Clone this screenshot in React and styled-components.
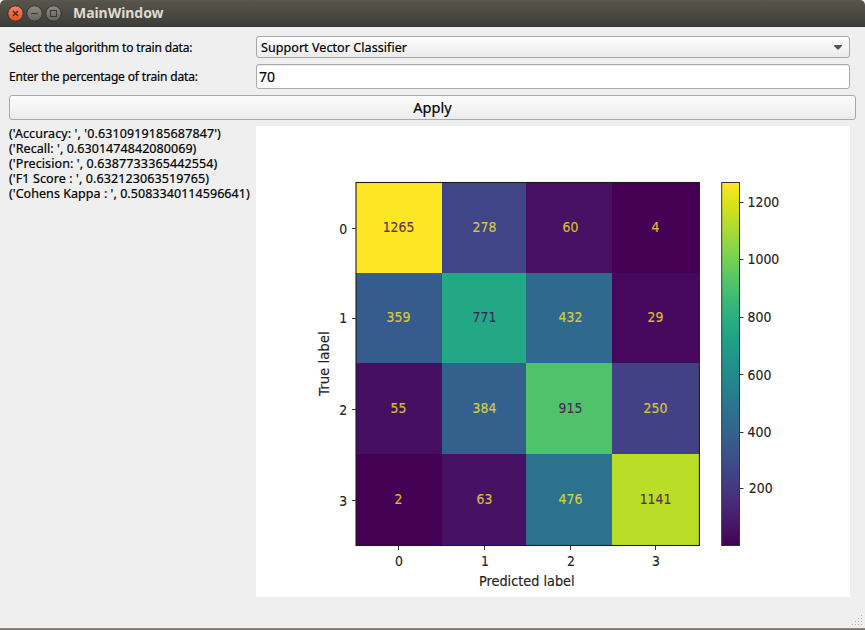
import React from "react";
import styled, { createGlobalStyle } from "styled-components";

const Global = createGlobalStyle`
  * { box-sizing: border-box; }
  body { margin: 0; background: #efefef; font-family: "Noto Sans", "Open Sans", sans-serif; color: #000; }
`;

const Window = styled.div`
  width: 865px;
  height: 630px;
  display: flex;
  flex-direction: column;
  background: #efefef;
  overflow: hidden;
`;

const TitleBar = styled.header`
  height: 27px;
  flex: none;
  display: flex;
  align-items: center;
  padding-left: 7px;
  background: linear-gradient(#5b584f 0, #56534b 2px, #3e3d39 100%);
  border-bottom: 1px solid #383733;
  border-radius: 5px 5px 0 0;
`;

const Controls = styled.svg`
  width: 56px;
  height: 18px;
  flex: none;
`;

const Title = styled.h1`
  margin: 0 0 0 10px;
  font-size: 14px;
  line-height: 20px;
  font-weight: 700;
  letter-spacing: -0.05px;
  color: #dfdbd2;
  white-space: nowrap;
`;

const Content = styled.main`
  flex: 1;
  display: flex;
  flex-direction: column;
  padding: 9px 9px 0;
`;

const Form = styled.div`
  display: grid;
  grid-template-columns: 247px 594px;
  grid-template-rows: 22px 25px;
  row-gap: 6px;
  align-items: stretch;
`;

const Text = styled.span`
  font-size: ${(p) => p.$size || 12.5}px;
  letter-spacing: ${(p) => p.$spacing || 0}px;
  line-height: 15px;
  white-space: pre;
  -webkit-text-stroke: 0.2px #000;
`;

const Label = styled.label`
  display: flex;
  align-items: center;
`;

const Select = styled.div`
  display: flex;
  align-items: center;
  justify-content: space-between;
  padding: 0 7px 0 4px;
  border: 1px solid #a9a9a9;
  border-radius: 3px;
  background: linear-gradient(#fdfdfd, #ebebeb);
`;

const Arrow = styled.svg`
  width: 8px;
  height: 5px;
`;

const Field = styled.div`
  display: flex;
  align-items: center;
  padding-left: 2px;
  border: 1px solid #a9a9a9;
  border-radius: 3px;
  background: #fff;
  box-shadow: inset 0 1px 0 #ebebeb;
`;

const Button = styled.button`
  height: 25px;
  flex: none;
  margin: 6px 0;
  padding: 0;
  width: 847px;
  border: 1px solid #a9a9a9;
  border-radius: 3px;
  background: linear-gradient(#fdfdfd, #ebebeb);
  font-family: inherit;
  color: #000;
`;

const Results = styled.div`
  display: grid;
  grid-template-columns: 247px 594px;
`;

const Metrics = styled.div`
  display: flex;
  flex-direction: column;
`;

const Plot = styled.svg`
  width: 594px;
  height: 471px;
  display: block;
  background: #fff;
`;

const PlotText = styled.text`
  font-family: "DejaVu Sans", sans-serif;
  font-size: ${(p) => p.$size}px;
`;

const Footer = styled.footer`
  height: 13px;
  flex: none;
  display: flex;
  justify-content: flex-end;
`;

const Grip = styled.svg`
  width: 13px;
  height: 13px;
`;

const Edge = styled.div`
  height: 2px;
  flex: none;
  background: linear-gradient(#949391, #6d6c6a);
`;

const metrics = [
  ["('Accuracy: ', '0.6310919185687847')", 0.11],
  ["('Recall: ', 0.6301474842080069)", 0.06],
  ["('Precision: ', 0.6387733365442554)", 0.11],
  ["('F1 Score : ', 0.632123063519765)", 0.1],
  ["('Cohens Kappa : ', 0.5083340114596641)", 0.05],
];

const xs = [356, 442, 526, 612, 699];
const ys = [182, 273, 363, 454, 545];
const xMid = [398.5, 484.5, 570.5, 655.5];
const yMid = [228.5, 318.5, 409.5, 500.5];
const cellBase = [232.4, 322.4, 413.4, 504.4];
const matrix = [
  [[1265, "#fde725"], [278, "#404588"], [60, "#471063"], [4, "#440154"]],
  [[359, "#365c8d"], [771, "#22a884"], [432, "#2f698e"], [29, "#46085c"]],
  [[55, "#470f62"], [384, "#33608d"], [915, "#4ec36b"], [250, "#424186"]],
  [[2, "#440154"], [63, "#471164"], [476, "#2c728e"], [1141, "#bade28"]],
];
const barTicks = [
  [1200, 202.5, 207.3], [1000, 259.5, 264.4], [800, 317.5, 322.2],
  [600, 374.5, 379.5], [400, 432.5, 437.2], [200, 488.5, 493.4],
];
const viridis = ["#fde725", "#d8e219", "#addc30", "#84d44b", "#5ec962", "#3fbc73", "#28ae80", "#1fa088", "#21918c", "#26828e", "#2c728e", "#33638d", "#3b528b", "#424086", "#472d7b", "#48186a", "#440154"];

function Caption({ x, y, children, fill = "#222", anchor = "middle", rotate = 0, opacity = 1, narrow = 0.865, size = 14.4 }) {
  return (
    <PlotText
      $size={size}
      transform={`translate(${x} ${y}) ${rotate ? `rotate(${rotate})` : ""} scale(${narrow} 1)`}
      textAnchor={anchor}
      fill={fill}
      stroke={fill}
      strokeWidth="0.15"
      opacity={opacity}
    >
      {children}
    </PlotText>
  );
}

function ConfusionMatrix() {
  return (
    <Plot viewBox="256 126 594 471">
      <defs>
        <linearGradient id="viridis" x1="0" y1="0" x2="0" y2="1">
          {viridis.map((c, i) => <stop key={c} offset={i / (viridis.length - 1)} stopColor={c} />)}
        </linearGradient>
      </defs>
      {matrix.map((row, r) => row.map(([n, color], c) => (
        <g key={`${r}-${c}`}>
          <rect x={xs[c]} y={ys[r]} width={xs[c + 1] - xs[c]} height={ys[r + 1] - ys[r]} fill={color} />
          <Caption x={xMid[c]} y={cellBase[r]} fill={n > 650 ? "#440154" : "#fde725"} opacity={0.8}>{n}</Caption>
        </g>
      )))}
      <rect x="356" y="182.5" width="343.4" height="363" fill="none" stroke="#1c1c1c" strokeWidth="1.1" />
      {xMid.map((x, i) => (
        <g key={x}>
          <path d={`M${x} 546v4`} stroke="#333" />
          <Caption x={x + 0.4} y={566}>{i}</Caption>
        </g>
      ))}
      {yMid.map((y, i) => (
        <g key={y}>
          <path d={`M352 ${y}h4`} stroke="#333" />
          <Caption x={343.2} y={[234, 323.4, 414.6, 505.5][i]}>{i}</Caption>
        </g>
      ))}
      <Caption x={526.8} y={585.6} narrow={0.92} size={14}>Predicted label</Caption>
      <Caption x={328.6} y={363.7} rotate={-90} narrow={0.97} size={13.7}>True label</Caption>
      <rect x="721.7" y="182.5" width="17.8" height="363" fill="url(#viridis)" stroke="#333" strokeWidth="1" />
      {barTicks.map(([n, y, base]) => (
        <g key={n}>
          <path d={`M740 ${y}h3.5`} stroke="#333" />
          <Caption x={n === 200 ? 748.8 : 747.6} y={base} anchor="start">{n}</Caption>
        </g>
      ))}
    </Plot>
  );
}

function WindowControls() {
  return (
    <Controls viewBox="7 4 56 18">
      <defs>
        <linearGradient id="close" x1="0" y1="0" x2="0" y2="1">
          <stop offset="0" stopColor="#f58561" />
          <stop offset="1" stopColor="#e3501f" />
        </linearGradient>
        <linearGradient id="plain" x1="0" y1="0" x2="0" y2="1">
          <stop offset="0" stopColor="#8f8d85" />
          <stop offset="1" stopColor="#66645d" />
        </linearGradient>
      </defs>
      <circle cx="15.5" cy="13.5" r="7.7" fill="url(#close)" stroke="#33322e" />
      <circle cx="34.5" cy="13.5" r="7.7" fill="url(#plain)" stroke="#33322e" />
      <circle cx="53.5" cy="13.5" r="7.7" fill="url(#plain)" stroke="#33322e" />
      <path d="M13 11l5 5M18 11l-5 5" stroke="#4a2418" strokeWidth="1.3" />
      <path d="M31 13.5h7" stroke="#3c3b37" strokeWidth="1.1" />
      <rect x="50.5" y="10.5" width="6" height="6" fill="none" stroke="#3c3b37" strokeWidth="1.1" />
    </Controls>
  );
}

const gripDots = [[9, 0], [6, 3], [9, 3], [3, 6], [6, 6], [9, 6], [0, 9], [3, 9], [6, 9], [9, 9]];

export default function App() {
  return (
    <>
      <Global />
      <Window>
        <TitleBar>
          <WindowControls />
          <Title>MainWindow</Title>
        </TitleBar>
        <Content>
          <Form>
            <Label><Text $size={12} $spacing={-0.17}>Select the algorithm to train data:</Text></Label>
            <Select>
              <Text $spacing={0.07}>Support Vector Classifier</Text>
              <Arrow viewBox="0 0 8 5"><path d="M0 0h8v1L4.5 4.5h-1L0 1z" fill="#555" /></Arrow>
            </Select>
            <Label><Text $size={12} $spacing={-0.16}>Enter the percentage of train data:</Text></Label>
            <Field><Text $size={14}>70</Text></Field>
          </Form>
          <Button><Text $size={14.5} $spacing={0.1}>Apply</Text></Button>
          <Results>
            <Metrics>
              {metrics.map(([line, spacing]) => <Text key={line} $spacing={spacing}>{line}</Text>)}
            </Metrics>
            <ConfusionMatrix />
          </Results>
        </Content>
        <Footer>
          <Grip viewBox="0 0 13 13">
            {gripDots.map(([x, y]) => <rect key={`${x}-${y}`} x={x} y={y} width="1" height="1" fill="#aaa" />)}
          </Grip>
        </Footer>
        <Edge />
      </Window>
    </>
  );
}
